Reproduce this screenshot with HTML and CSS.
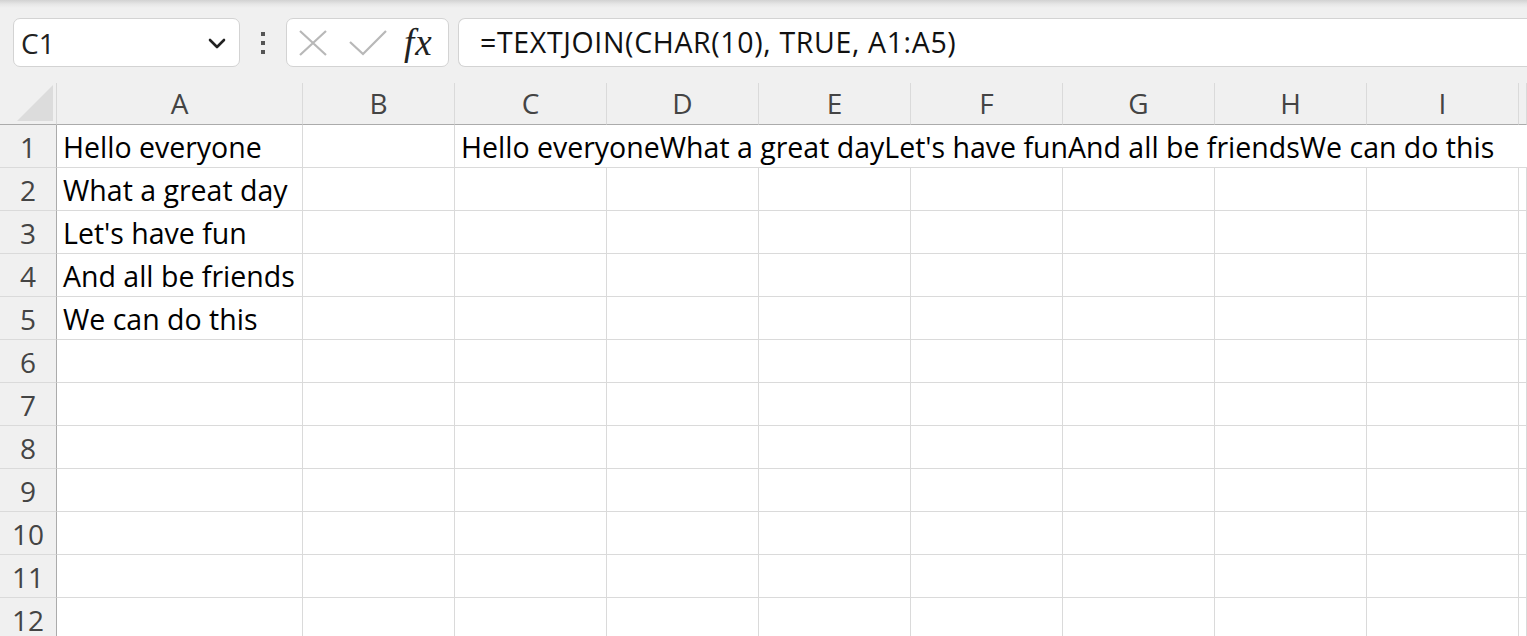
FILE: index.html
```html
<!DOCTYPE html>
<html>
<head>
<meta charset="utf-8">
<link rel="stylesheet" href="styles.css">
</head>
<body>
<div class="app">
  <div class="toolbar">
    <div class="namebox">
      <span class="name">C1</span>
      <svg class="chev" width="18" height="12" viewBox="0 0 18 12"><path d="M2 2 L9 9 L16 2" fill="none" stroke="#222" stroke-width="2.6" stroke-linecap="round" stroke-linejoin="round"/></svg>
    </div>
    <div class="dots"><i></i><i></i><i></i></div>
    <div class="fxbox">
      <svg class="icon" width="30" height="28" viewBox="0 0 30 28"><path d="M2 2 L28 26 M28 2 L2 26" stroke="#b8b8b8" stroke-width="2.2" fill="none"/></svg>
      <svg class="icon" width="38" height="26" viewBox="0 0 38 26"><path d="M1 12 L14 24 L37 1" stroke="#b8b8b8" stroke-width="2.2" fill="none"/></svg>
      <span class="fx">fx</span>
    </div>
    <div class="formula">=TEXTJOIN(CHAR(10), TRUE, A1:A5)</div>
  </div>
  <div class="grid">
    <div class="corner"><svg width="36" height="36" viewBox="0 0 36 36"><path d="M36 0 L36 36 L0 36 Z" fill="#dcdcdc"/></svg></div>
    <div class="ch">A</div><div class="ch">B</div><div class="ch">C</div><div class="ch">D</div><div class="ch">E</div><div class="ch">F</div><div class="ch">G</div><div class="ch">H</div><div class="ch">I</div><div class="ch"></div>

    <div class="rh">1</div><div class="c">Hello everyone</div><div class="c"></div><div class="c span">Hello everyoneWhat a great dayLet's have funAnd all be friendsWe can do this</div>
    <div class="rh">2</div><div class="c">What a great day</div><div class="c"></div><div class="c"></div><div class="c"></div><div class="c"></div><div class="c"></div><div class="c"></div><div class="c"></div><div class="c"></div><div class="c"></div>
    <div class="rh">3</div><div class="c">Let's have fun</div><div class="c"></div><div class="c"></div><div class="c"></div><div class="c"></div><div class="c"></div><div class="c"></div><div class="c"></div><div class="c"></div><div class="c"></div>
    <div class="rh">4</div><div class="c">And all be friends</div><div class="c"></div><div class="c"></div><div class="c"></div><div class="c"></div><div class="c"></div><div class="c"></div><div class="c"></div><div class="c"></div><div class="c"></div>
    <div class="rh">5</div><div class="c">We can do this</div><div class="c"></div><div class="c"></div><div class="c"></div><div class="c"></div><div class="c"></div><div class="c"></div><div class="c"></div><div class="c"></div><div class="c"></div>
    <div class="rh">6</div><div class="c"></div><div class="c"></div><div class="c"></div><div class="c"></div><div class="c"></div><div class="c"></div><div class="c"></div><div class="c"></div><div class="c"></div><div class="c"></div>
    <div class="rh">7</div><div class="c"></div><div class="c"></div><div class="c"></div><div class="c"></div><div class="c"></div><div class="c"></div><div class="c"></div><div class="c"></div><div class="c"></div><div class="c"></div>
    <div class="rh">8</div><div class="c"></div><div class="c"></div><div class="c"></div><div class="c"></div><div class="c"></div><div class="c"></div><div class="c"></div><div class="c"></div><div class="c"></div><div class="c"></div>
    <div class="rh">9</div><div class="c"></div><div class="c"></div><div class="c"></div><div class="c"></div><div class="c"></div><div class="c"></div><div class="c"></div><div class="c"></div><div class="c"></div><div class="c"></div>
    <div class="rh">10</div><div class="c"></div><div class="c"></div><div class="c"></div><div class="c"></div><div class="c"></div><div class="c"></div><div class="c"></div><div class="c"></div><div class="c"></div><div class="c"></div>
    <div class="rh">11</div><div class="c"></div><div class="c"></div><div class="c"></div><div class="c"></div><div class="c"></div><div class="c"></div><div class="c"></div><div class="c"></div><div class="c"></div><div class="c"></div>
    <div class="rh">12</div><div class="c"></div><div class="c"></div><div class="c"></div><div class="c"></div><div class="c"></div><div class="c"></div><div class="c"></div><div class="c"></div><div class="c"></div><div class="c"></div>
  </div>
</div>
</body>
</html>
```
FILE: styles.css
```css
html, body {
  margin: 0;
  padding: 0;
  height: 100%;
  overflow: hidden;
  background: #f0f0f0;
  font-family: "Open Sans", "Noto Sans", sans-serif;
}
.app {
  width: 1527px;
  height: 636px;
  overflow: hidden;
}
.toolbar {
  height: 83px;
  box-sizing: border-box;
  padding: 18px 0 0 13px;
  display: flex;
  align-items: flex-start;
  background: linear-gradient(to bottom, #d2d2d2 0px, #e6e6e6 4px, #f0f0f0 8px, #f0f0f0 100%);
}
.namebox {
  width: 227px;
  height: 49px;
  box-sizing: border-box;
  border: 1px solid #d3d3d3;
  border-radius: 7px;
  background: #fff;
  display: flex;
  align-items: center;
  justify-content: space-between;
  padding: 0 13px 0 7px;
}
.name {
  font-size: 28px;
  color: #222;
  line-height: 1;
}
.chev { display: block; margin-top: 2px; }
.dots {
  width: 46px;
  height: 49px;
  display: flex;
  flex-direction: column;
  align-items: center;
  justify-content: center;
  gap: 5px;
}
.dots i {
  display: block;
  width: 4px;
  height: 4px;
  background: #555;
}
.fxbox {
  width: 163px;
  height: 49px;
  box-sizing: border-box;
  border: 1px solid #d3d3d3;
  border-radius: 7px;
  background: #fff;
  display: flex;
  align-items: center;
  padding: 0 0 0 11px;
  gap: 21px;
}
.icon { display: block; }
.fx {
  font-family: "Liberation Serif", "DejaVu Serif", serif;
  font-style: italic;
  font-weight: normal;
  font-size: 37px;
  color: #222;
  margin-left: -4px;
  line-height: 1;
  letter-spacing: 1px;
}
.formula {
  margin-left: 9px;
  flex: 1;
  height: 49px;
  box-sizing: border-box;
  border: 1px solid #d3d3d3;
  border-right: none;
  border-radius: 7px 0 0 7px;
  background: #fff;
  font-size: 28.5px;
  letter-spacing: 0.65px;
  line-height: 46px;
  color: #111;
  padding-left: 21px;
  white-space: nowrap;
}
.grid {
  display: grid;
  grid-template-columns: 57px 246px repeat(8, 152px) 1fr;
  grid-template-rows: 42px repeat(12, 43px);
}
.corner {
  box-sizing: border-box;
  border-right: 1px solid #d8d8d8;
  border-bottom: 1px solid #ababab;
  display: flex;
  align-items: flex-end;
  justify-content: flex-end;
  padding: 0 3px 3px 0;
}
.corner svg { display: block; }
.ch {
  box-sizing: border-box;
  border-right: 1px solid #dadada;
  border-bottom: 1px solid #ababab;
  font-size: 28px;
  line-height: 41px;
  text-align: center;
  color: #444;
}
.rh {
  box-sizing: border-box;
  border-right: 1px solid #ababab;
  border-bottom: 1px solid #dadada;
  font-size: 28px;
  line-height: 42px;
  padding-top: 1px;
  text-align: center;
  color: #444;
}
.c {
  box-sizing: border-box;
  background: #fff;
  border-right: 1px solid #dadada;
  border-bottom: 1px solid #dadada;
  font-size: 28.5px;
  line-height: 42px;
  padding-top: 1px;
  color: #000;
  padding-left: 6px;
  white-space: nowrap;
  overflow: hidden;
}
.span {
  grid-column: 4 / -1;
  border-right: none;
}
```
